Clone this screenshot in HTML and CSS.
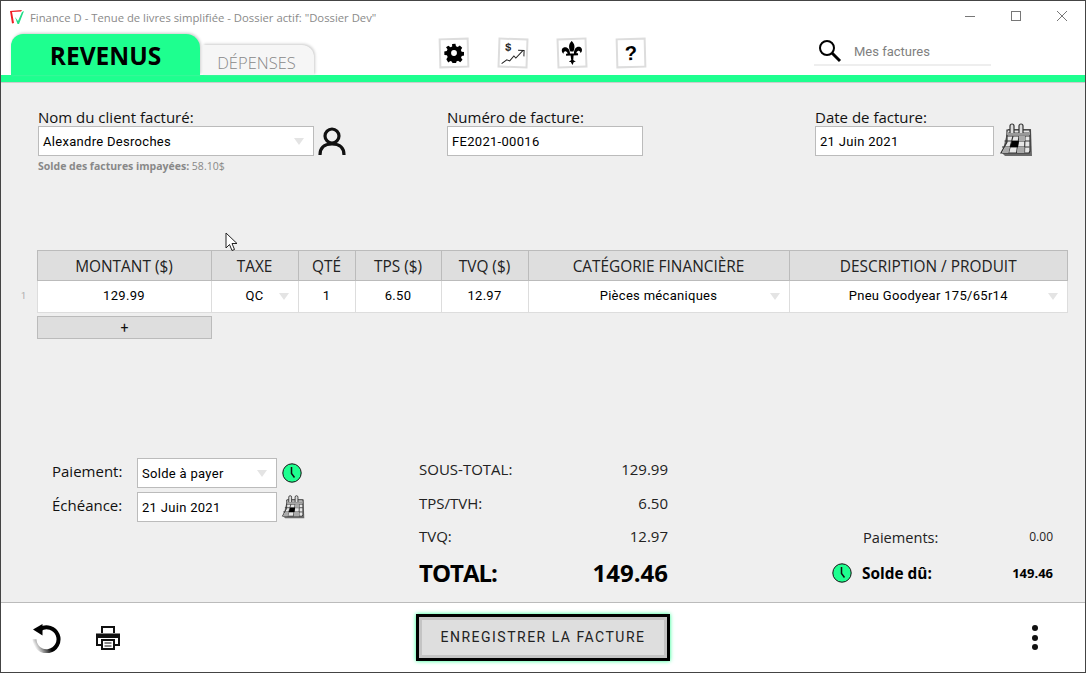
FILE: index.html
```html
<!DOCTYPE html>
<html>
<head>
  <title>Finance D</title>
  <link rel="stylesheet" href="styles.css">
</head>
<body>
  <svg class="defs" width="0" height="0">
    <symbol id="clock" viewBox="0 0 20 20">
      <circle cx="10" cy="10" r="9.2" fill="#1eff8f" stroke="#111" stroke-width="1"/>
      <path d="M9.5 4v6.5l3 4" fill="none" stroke="#111" stroke-width="1.5"/>
    </symbol>
    <symbol id="calendar" viewBox="0 0 34 34">
      <path d="M9 6h23l1 27H6l-3-3z" fill="#6a6a6a"/>
      <path d="M8 7h23v21l-1 2H2l6-11z" fill="#e6e6e6" stroke="#333" stroke-width="1.200"/>
      <path d="M7.500 13h23.500M5.500 18h25.500M3 24h27.500M14 13l-4.500 17M20 13l-2.500 17M26 13l-.5 17" stroke="#333" stroke-width="1.100" fill="none"/>
      <path d="M13 18h7l-1 6h-8z" fill="#000"/>
      <path d="M20 13h6v5h-6zM6 24h5l-1.500 6H3zM19 24h6.500v6H18z" fill="#aaa"/>
      <path d="M8 9h23v3H8z" fill="#999"/>
      <path d="M11 10V3a2 2 0 0 1 4 0v7M20 10V3a2 2 0 0 1 4 0v7" fill="#ddd" stroke="#333" stroke-width="1.200"/>
    </symbol>
  </svg>

  <div class="window">
    <header class="titlebar">
      <svg class="logo" width="16" height="16" viewBox="0 0 16 16">
        <path d="M1 2l12-1-1 1.500-9 .5 2 11-2 .5z" fill="#f01c24"/>
        <path d="M6 8l3 4 4-9 2-1-5 13H8.500z" fill="#22dd88"/>
      </svg>
      <span class="window-title">Finance D - Tenue de livres simplifiée - Dossier actif: "Dossier Dev"</span>
      <div class="window-btns">
        <svg width="12" height="12" viewBox="0 0 12 12"><path d="M1 6.500h10" stroke="#777"/></svg>
        <svg width="12" height="12" viewBox="0 0 12 12"><rect x="1.500" y="1.500" width="9" height="9" fill="none" stroke="#777"/></svg>
        <svg width="12" height="12" viewBox="0 0 12 12"><path d="M1 1l10 10M11 1L1 11" stroke="#777"/></svg>
      </div>
    </header>

    <nav class="toolbar">
      <div class="tabs">
        <div class="tab tab-active">REVENUS</div>
        <div class="tab tab-other">DÉPENSES</div>
      </div>
      <div class="tools">
        <div class="tool tilt-a">
          <svg width="20" height="20" viewBox="0 0 24 24"><path fill="#000" fill-rule="evenodd" d="M10 1h4l.6 3 2 .9 2.600-1.700 2.800 2.800-1.700 2.600.9 2 3 .6v4l-3 .6-.9 2 1.700 2.600-2.800 2.800-2.600-1.700-2 .9-.6 3h-4l-.6-3-2-.9-2.600 1.700L2.600 19.200l1.700-2.600-.9-2-3-.6v-4l3-.6.9-2-1.700-2.600L5.400 3.200l2.600 1.700 2-.9zM12 8.500a3.500 3.500 0 1 0 0 7 3.500 3.500 0 0 0 0-7z"/></svg>
        </div>
        <div class="tool tilt-b">
          <svg width="26" height="26" viewBox="0 0 26 26">
            <text x="5" y="11" class="dollar">$</text>
            <path d="M2 24l5-4 3 1 4-5 2 2 7-8" fill="none" stroke="#222"/>
            <path d="M18 10h6v6" fill="none" stroke="#222"/>
          </svg>
        </div>
        <div class="tool tilt-c">
          <svg width="22" height="24" viewBox="0 0 22 24"><path fill="#000" d="M11 0C8 3 7.500 6 9.500 10.500h3C14.500 6 14 3 11 0zM9 12.500C9 8 6.500 5.500 3.500 6 .5 6.500 0 10.500 2.500 12.500c0-2 1.500-3 3-2 1 .7 1 1.500 1 2H5V14.500h4.500L10 19l-2.500 2h2L11 24l1.500-3h2L12 19l.5-4.500H17v-2h-1.500c0-.5 0-1.300 1-2 1.500-1 3 0 3 2C22 10.500 21.500 6.500 18.500 6 15.500 5.500 13 8 13 12.500z"/></svg>
        </div>
        <div class="tool tilt-a"><span class="help">?</span></div>
      </div>
      <div class="search">
        <svg width="24" height="24" viewBox="0 0 24 24"><circle cx="9" cy="9" r="7" fill="none" stroke="#000" stroke-width="2"/><path d="M14 14l8 8" stroke="#000" stroke-width="3"/></svg>
        <span class="search-text">Mes factures</span>
      </div>
    </nav>
    <div class="accent"></div>

    <main class="content">
      <section class="head-row">
        <div class="field client">
          <label class="lbl">Nom du client facturé:</label>
          <div class="field-line">
            <div class="box box-client">Alexandre Desroches<i class="arrow"></i></div>
            <svg class="user" width="30" height="30" viewBox="0 0 30 30"><circle cx="15" cy="10" r="7" fill="none" stroke="#111" stroke-width="3.200"/><path d="M3 29c0-8 5-11 12-11s12 3 12 11" fill="none" stroke="#111" stroke-width="3.200"/></svg>
          </div>
          <p class="unpaid"><b>Solde des factures impayées:</b> 58.10$</p>
        </div>
        <div class="field number">
          <label class="lbl">Numéro de facture:</label>
          <div class="box box-number">FE2021-00016</div>
        </div>
        <div class="field date">
          <label class="lbl">Date de facture:</label>
          <div class="field-line">
            <div class="box box-date">21 Juin 2021</div>
            <svg class="cal-big" width="34" height="34"><use href="#calendar"/></svg>
          </div>
        </div>
      </section>

      <section class="lines">
        <table class="grid">
          <thead>
            <tr>
              <th class="rownum"></th>
              <th class="c-amount">MONTANT ($)</th>
              <th class="c-tax">TAXE</th>
              <th class="c-qty">QTÉ</th>
              <th class="c-tps">TPS ($)</th>
              <th class="c-tvq">TVQ ($)</th>
              <th class="c-cat">CATÉGORIE FINANCIÈRE</th>
              <th class="c-desc">DESCRIPTION / PRODUIT</th>
            </tr>
          </thead>
          <tbody>
            <tr>
              <td class="rownum">1</td>
              <td>129.99</td>
              <td class="has-arrow">QC<i class="arrow"></i></td>
              <td>1</td>
              <td>6.50</td>
              <td>12.97</td>
              <td class="has-arrow">Pièces mécaniques<i class="arrow"></i></td>
              <td class="has-arrow">Pneu Goodyear 175/65r14<i class="arrow"></i></td>
            </tr>
          </tbody>
        </table>
        <button class="add-line">+</button>
      </section>

      <section class="bottom">
        <div class="pay">
          <div class="pay-row">
            <span class="pay-lbl">Paiement:</span>
            <div class="box box-pay">Solde à payer<i class="arrow"></i></div>
            <svg width="20" height="20"><use href="#clock"/></svg>
          </div>
          <div class="pay-row">
            <span class="pay-lbl">Échéance:</span>
            <div class="box box-pay">21 Juin 2021</div>
            <svg class="cal-small" width="24" height="24"><use href="#calendar"/></svg>
          </div>
        </div>
        <div class="totals">
          <div class="total-row"><span>SOUS-TOTAL:</span><span>129.99</span></div>
          <div class="total-row"><span>TPS/TVH:</span><span>6.50</span></div>
          <div class="total-row"><span>TVQ:</span><span>12.97</span></div>
          <div class="total-row grand"><span class="grand-lbl">TOTAL:</span><span>149.46</span></div>
        </div>
        <div class="due">
          <div class="due-row"><span class="due-lbl">Paiements:</span><span class="due-val">0.00</span></div>
          <div class="due-row due-strong">
            <svg width="20" height="20"><use href="#clock"/></svg>
            <span class="due-lbl">Solde dû:</span><span class="due-val">149.46</span>
          </div>
        </div>
      </section>
    </main>

    <footer class="footer">
      <div class="foot-left">
        <svg width="30" height="30" viewBox="0 0 30 30">
          <defs>
            <linearGradient id="fade" x1="0.800" y1="0.400" x2="0" y2="0.800">
              <stop offset="0.350" stop-color="#000"/>
              <stop offset="1" stop-color="#fff"/>
            </linearGradient>
          </defs>
          <path d="M8 6.200a12 12 0 1 1-5.500 10" fill="none" stroke="url(#fade)" stroke-width="4"/>
          <path d="M1 6.500l9.500-5.500v11.500z" fill="#000"/>
        </svg>
        <svg width="26" height="26" viewBox="0 0 26 26">
          <path d="M7 8V2h12v6M6 20H2V9.500h22V20h-4" fill="none" stroke="#111" stroke-width="2"/>
          <path d="M2 9h22v4H2z" fill="#111"/>
          <rect x="7" y="15" width="12" height="9" fill="#fff" stroke="#111" stroke-width="2"/>
          <path d="M9.500 18h7M9.500 21h7" stroke="#111"/>
        </svg>
      </div>
      <button class="save">ENREGISTRER LA FACTURE</button>
      <div class="more"><i></i><i></i><i></i></div>
    </footer>

    <svg class="cursor" width="14" height="20" viewBox="0 0 14 20"><path d="M1 1v15l3.500-3.500 2.500 6 2.500-1-2.500-6h5z" fill="#fff" stroke="#222"/></svg>
  </div>
</body>
</html>
```

FILE: styles.css
```css
* { box-sizing: border-box; }
body { margin: 0; font-family: "Open Sans", sans-serif; overflow: hidden; }
.defs { position: absolute; }

.window { position: relative; width: 1086px; height: 673px; display: flex; flex-direction: column; background: #fff; border: 1px solid #444; }

.titlebar { height: 32px; display: flex; align-items: center; padding-left: 8px; flex: none; }
.logo { margin-right: 5px; }
.window-title { font-size: 11.300px; color: #8a8a8a; }
.window-btns { margin-left: auto; display: flex; gap: 34px; padding-right: 17px; margin-top: -3px; }
.window-btns svg { display: block; }

.toolbar { height: 42px; display: flex; flex: none; position: relative; }
.tabs { display: flex; align-items: flex-end; padding-left: 10px; width: 438px; }
.tab { text-align: center; }
.tab-active { width: 189px; height: 41px; background: #1eff8f; border-radius: 12px 14px 0 0; font-size: 24.500px; font-weight: 700; line-height: 44px; color: #000; box-shadow: 1px -1px 3px #ccc; }
.tab-other { width: 111px; height: 30px; margin-left: 3px; padding-right: 4px; background: #f6f6f6; border-radius: 0 12px 0 0; font-size: 16.500px; font-weight: 300; line-height: 35px; color: #888; box-shadow: 1px -1px 3px #ccc; }
.tools { display: flex; gap: 29px; padding-top: 5px; }
.tool { width: 30px; height: 30px; background: #fff; border: 2px solid #ddd; display: flex; align-items: center; justify-content: center; }
.tilt-a { transform: rotate(-1.500deg); }
.tilt-b { transform: rotate(2deg); }
.tilt-c { transform: rotate(-2deg); }
.dollar { font: bold 11px "Liberation Sans", sans-serif; fill: #222; }
.help { font: bold 20px "Liberation Sans", sans-serif; color: #000; }
.search { position: absolute; left: 813px; top: 5px; width: 177px; height: 28px; display: flex; align-items: center; padding-left: 4px; border-bottom: 2px solid #eee; }
.search-text { margin-left: 12px; font: 13px Roboto, sans-serif; color: #808080; }

.accent { height: 8px; flex: none; background: #1eff8f; border-bottom: 1px solid #ccc; }

.content { flex: 1; background: #efefef; padding: 25px 17px 0 36px; display: flex; flex-direction: column; }

.head-row { display: flex; height: 142px; flex: none; }
.field { display: flex; flex-direction: column; }
.client { width: 409px; margin-left: 1px; }
.number { width: 368px; }
.lbl { font-size: 15px; line-height: 18px; color: #111; }
.field-line { display: flex; align-items: center; height: 30px; }
.box { position: relative; height: 30px; background: #fff; border: 1px solid #bbb; font: 13px/30px Roboto, sans-serif; letter-spacing: 0.300px; color: #000; padding-left: 4px; white-space: nowrap; }
.box-client { width: 276px; }
.box-number { width: 196px; }
.box-date { width: 179px; }
.user { margin-left: 3px; }
.cal-big { margin: -3px 0 0 5px; }
.cal-small { margin: 0 0 0 -1px; }
.unpaid { margin: 3px 0 0; font: 10.500px "Open Sans", sans-serif; color: #888; }
.arrow { position: absolute; right: 9px; top: 50%; margin-top: -3px; border-left: 5px solid transparent; border-right: 5px solid transparent; border-top: 7px solid #e4e4e4; }

.lines { flex: none; margin-left: -21px; }
.grid { width: 1052px; border-collapse: collapse; table-layout: fixed; }
.grid th { height: 30px; background: #dedede; border: 1px solid #bbb; font-size: 15.400px; font-weight: 400; color: #222; padding: 2px 0 0; }
.grid td { height: 32px; background: #fff; border: 1px solid #ddd; font: 13px Roboto, sans-serif; letter-spacing: 0.300px; text-align: center; color: #000; padding: 0 0 2px; }
.grid .rownum { width: 21px; background: none; border: none; font-size: 9px; color: #aaa; text-align: left; padding-left: 5px; }
.has-arrow { position: relative; }
.has-arrow .arrow { margin-top: -4px; }
.c-amount { width: 174px; }
.c-tax { width: 87px; }
.c-qty { width: 57px; }
.c-tps { width: 86px; }
.c-tvq { width: 87px; }
.c-cat { width: 261px; }
.add-line { display: block; width: 175px; height: 23px; margin: 3px 0 0 21px; background: #dedede; border: 1px solid #bbb; font: 14px Roboto, sans-serif; color: #111; padding: 0; }

.bottom { display: flex; margin-top: auto; padding-bottom: 11px; }
.pay { width: 382px; padding-left: 15px; padding-top: 5px; }
.pay-row { display: flex; align-items: center; height: 30px; margin-bottom: 4px; }
.pay-lbl { width: 85px; font-size: 15px; color: #111; margin-top: -3px; }
.box-pay { width: 140px; margin-right: 5px; }
.totals { width: 249px; }
.total-row { display: flex; justify-content: space-between; align-items: center; height: 33.500px; font-size: 15px; color: #222; }
.total-row.grand { height: 38px; font-size: 24px; font-weight: 700; color: #000; }
.grand-lbl { letter-spacing: -1px; }
.due { width: 221px; margin-left: 164px; align-self: flex-end; }
.due-row { display: flex; align-items: center; justify-content: flex-end; height: 33px; font-size: 14.600px; color: #222; }
.due-lbl { margin-right: auto; padding-left: 31px; }
.due-val { font-size: 12px; }
.due-strong { height: 38px; padding-top: 2px; font-size: 15.400px; font-weight: 700; color: #000; }
.due-strong .due-lbl { padding-left: 10px; }
.due-strong .due-val { font-size: 13px; }

.footer { height: 70px; flex: none; display: flex; align-items: center; background: #fff; border-top: 1px solid #bbb; }
.foot-left { width: 415px; padding-left: 31px; display: flex; align-items: center; gap: 33px; }
.save { width: 254px; height: 47px; background: #dedede; border: 3px solid #000; box-shadow: 0 0 4px #1eff8f, inset 0 -3px 0 #c4c4c4, inset 3px 0 0 #c4c4c4, inset -3px 0 0 #c4c4c4, inset 0 3px 0 #c4c4c4; font: 14px Roboto, sans-serif; letter-spacing: 1.500px; color: #222; padding: 0 0 2px; }
.more { margin-left: auto; margin-right: 47px; display: flex; flex-direction: column; gap: 3.500px; }
.more i { display: block; width: 6px; height: 6px; border-radius: 50%; background: #111; }

.cursor { position: absolute; left: 224px; top: 231px; }
```
